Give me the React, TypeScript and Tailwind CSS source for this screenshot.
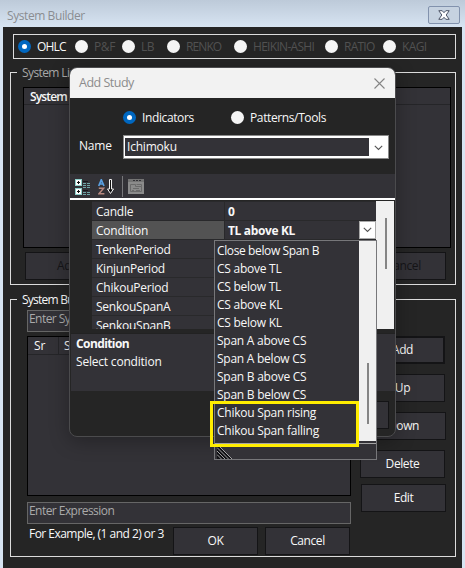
import clsx from "clsx";
import type { ReactNode } from "react";

const chartTypes = [
  { label: "OHLC", cell: "w-[57px]", text: "tracking-[-0.8px]" },
  { label: "P&F", cell: "w-[47px]", text: "tracking-[-0.4px]" },
  { label: "LB", cell: "w-[45px]", text: "tracking-[-0.5px]" },
  { label: "RENKO", cell: "w-[67px]", text: "tracking-[-0.9px]" },
  { label: "HEIKIN-ASHI", cell: "w-[91px]", text: "tracking-[-0.7px]" },
  { label: "RATIO", cell: "w-[58px]", text: "tracking-[-0.75px]" },
  { label: "KAGI", cell: "w-[60px]", text: "tracking-[-0.6px]" },
];

const properties = [
  { name: "Candle", value: "0" },
  { name: "Condition", value: "TL above KL", selected: true },
  { name: "TenkenPeriod", value: "" },
  { name: "KinjunPeriod", value: "" },
  { name: "ChikouPeriod", value: "" },
  { name: "SenkouSpanA", value: "" },
  { name: "SenkouSpanB", value: "" },
];

const conditions = [
  "Close below Span B",
  "CS above TL",
  "CS below TL",
  "CS above KL",
  "CS below KL",
  "Span A above CS",
  "Span A below CS",
  "Span B above CS",
  "Span B below CS",
  "Chikou Span rising",
  "Chikou Span falling",
];

function Radio({ checked }: { checked?: boolean }) {
  return (
    <span
      className={clsx(
        "flex h-[13px] w-[13px] shrink-0 items-center justify-center rounded-full",
        checked ? "bg-[#0067c0]" : "bg-[#f5f5f5]"
      )}
    >
      {checked && <span className="h-[5px] w-[5px] rounded-full bg-white" />}
    </span>
  );
}

function Chevron() {
  return (
    <svg width="9" height="6" viewBox="0 0 9 6" fill="none" stroke="#555" strokeWidth="1.1">
      <path d="M0.8 0.8 L4.5 4.5 L8.2 0.8" />
    </svg>
  );
}

function Button({ children, className }: { children?: ReactNode; className?: string }) {
  return (
    <button
      className={clsx(
        "flex h-7 w-[85px] shrink-0 items-center justify-center border border-[#141416] bg-[#333237] tracking-[-0.4px]",
        className
      )}
    >
      {children}
    </button>
  );
}

function Group({
  title,
  titleClass,
  className,
  children,
}: {
  title: string;
  titleClass?: string;
  className?: string;
  children: ReactNode;
}) {
  return (
    <section className={clsx("ml-[7px] w-[446px] border border-[#dcdcdc]", className)}>
      <div className={clsx("-mt-[9px] ml-[6px] flex h-[18px] w-max items-center bg-[#252525] px-[5px]", titleClass)}>
        {title}
      </div>
      {children}
    </section>
  );
}

function Toolbar() {
  return (
    <div className="flex h-6 items-center bg-[#333237] pt-px pl-[5px]">
      {/* Categorized */}
      <svg width="16" height="16" viewBox="0 0 16 16" shapeRendering="crispEdges">
        <path fill="#8fd0cb" d="M0 0h7v7H0zM0 9h7v7H0z" />
        <path fill="#fff" d="M1 1h5v5H1zM1 10h5v5H1z" />
        <path fill="#111" d="M3 2h1v3H3zM2 3h3v1H2zM3 11h1v3H3zM2 12h3v1H2z" />
        <path
          stroke="#6fa5a7"
          strokeDasharray="3 1"
          d="M8 4.5h8M8 6.5h8M8 8.5h8M8 13.5h8M8 15.5h8"
        />
        <path stroke="#17171b" d="M8 2.5h5M8 11.5h5" />
      </svg>
      {/* Alphabetical */}
      <svg className="ml-[7px]" width="16" height="16" viewBox="0 0 16 16" fill="none">
        <path stroke="#5a9fe0" strokeWidth="1.7" d="M0.7 7L3.3 0.8L6 7M1.5 5H5.2" />
        <path stroke="#b78980" strokeWidth="1.5" d="M0.8 9.2H5.6L1 14.7H6.4" />
        <path stroke="#f4f4f4" fill="#111" d="M11.5 0.5h2v9.5h2l-3 4.5l-3-4.5h2z" />
      </svg>
      <span className="ml-2 h-[21px] w-px bg-[#77777a]" />
      {/* Property pages */}
      <svg className="ml-[5px]" width="16" height="15" viewBox="0 0 16 15" fill="none">
        <path fill="#8b8b8b" d="M0 0h16v15H0z" />
        <path fill="#747474" d="M0 0h16v3H0z" />
        <path stroke="#333237" d="M5 1.5h2M8 1.5h2M11 1.5h2" />
        <path stroke="#6a6a6a" d="M2.5 5.5h5v2h6v5h-11zM5 9.5h6M4 11.5h2M8 11.5h4M8.5 5.5h5v2" />
      </svg>
    </div>
  );
}

function ConditionMenu() {
  return (
    <div className="absolute top-[240px] left-[214px] flex h-[220px] w-[163px] flex-col border border-[#77777a] bg-[#333237]">
      <div className="flex h-[202px]">
        <ul className="w-36 pt-px pl-[2px] tracking-[-0.25px]">
          {conditions.map((item) => (
            <li key={item} className="h-[18px] leading-[18px] whitespace-nowrap first:tracking-[-0.38px]">
              {item}
            </li>
          ))}
        </ul>
        <div className="h-[200px] w-[17px] bg-[#f0f0f0] pt-[122px] pl-2">
          <div className="h-[61px] w-[2px] bg-[#858585]" />
        </div>
      </div>
      <div className="flex flex-1 items-end border-t border-[#a5a5a5] pl-[2px]">
        <svg width="15" height="12" viewBox="0 0 15 12">
          <path fill="#111115" d="M0 0h3l12 12H0z" />
          <path stroke="#c8c8c8" strokeWidth="0.8" d="M3 0l12 12M0 0.5L11.5 12M0 4l8 8M0 7.5L4.5 12" />
        </svg>
      </div>
    </div>
  );
}

function AddStudyDialog() {
  return (
    <div className="absolute top-[67px] left-[69px] h-[370px] w-[327px] overflow-hidden rounded-[8px] border border-[#4b4b4d] bg-[#252525] shadow-[0_4px_20px_rgba(0,0,0,0.3)]">
      <header className="flex h-[30px] items-center justify-between bg-[#f2f2f2] pr-[10px] pl-[9px] text-[#8c8c8c]">
        <span className="text-[12.5px] tracking-[-0.5px]">Add Study</span>
        <svg width="11" height="11" viewBox="0 0 11 11" stroke="#858585" strokeWidth="1.1">
          <path d="M0.5 0.5l10 10M10.5 0.5l-10 10" />
        </svg>
      </header>

      <div className="flex h-[39px] items-center pl-[53px]">
        <div className="flex w-[108px] items-center gap-[6px]">
          <Radio checked />
          <span className="tracking-[-0.38px]">Indicators</span>
        </div>
        <div className="flex items-center gap-[6px]">
          <Radio />
          <span className="tracking-[-0.38px]">Patterns/Tools</span>
        </div>
      </div>

      <div className="flex h-[37px] pl-[9px]">
        <span className="w-11 pt-px">Name</span>
        <div className="-mt-[2px] flex h-6 w-[266px] border border-[#8a8a8a] bg-white p-px pt-[2px]">
          <div className="h-[18px] w-[244px] bg-[#333237] pl-[2px] leading-[17px]">Ichimoku</div>
          <div className="flex flex-1 items-center justify-center">
            <Chevron />
          </div>
        </div>
      </div>

      <Toolbar />
      <div className="h-[2px] bg-white" />

      <div className="flex h-[129px] overflow-hidden pt-px">
        <div className="w-[306px] pl-[22px]">
          {properties.map((row) => (
            <div key={row.name} className="flex h-[19px] border-t border-[#29292b] bg-[#333237] leading-[19px]">
              <div
                className={clsx(
                  "w-[133px] border-r border-[#29292b] pl-1 tracking-[-0.25px]",
                  row.selected && "bg-[#535353]"
                )}
              >
                {row.name}
              </div>
              <div className="flex-1 pl-[3px] font-bold tracking-[-0.35px]">{row.value}</div>
              {row.selected && (
                <div className="flex h-[18px] w-[17px] items-center justify-center border border-[#aaa] bg-white">
                  <Chevron />
                </div>
              )}
            </div>
          ))}
        </div>
        <div className="h-[128px] w-[18px] bg-[#f0f0f0] pt-[17px] pl-[9px]">
          <div className="h-[51px] w-[2px] bg-[#858585]" />
        </div>
      </div>

      <div className="mt-1 ml-px h-[58px] border-t border-[#222] bg-[#333237] pl-[5px] leading-[18px]">
        <div className="pt-[1px] font-bold tracking-[-0.6px]">Condition</div>
        <div>Select condition</div>
      </div>
      <div className="flex justify-end pt-[10px] pr-[6px]">
        <Button />
      </div>
    </div>
  );
}

export default function App() {
  return (
    <div className="relative h-[568px] w-[465px] overflow-hidden bg-[#d7e4f2] font-['Open_Sans','Noto_Sans',sans-serif] text-[12px] leading-4 tracking-[-0.2px] whitespace-nowrap text-[#f8f8f8]">
      <header className="flex h-[27px] justify-between bg-linear-to-b from-[#bdcad9] to-[#d7e4f2] pr-[5px] pl-[7px] text-[#8a8d91]">
        <span className="pt-[8px] tracking-[-0.42px]">System Builder</span>
        <div className="mt-[6px] flex h-[18px] w-8 items-center justify-center rounded-[2px] border border-[#8292ad] bg-[#c6d2e0]">
          <svg width="12" height="10" viewBox="0 0 12 10">
            <path
              fill="#fff"
              stroke="#4d5466"
              d="M0.8 0.7h3.4L6 2.7L7.8 0.7h3.4L8.2 5l3 4.3H7.8L6 7.3L4.2 9.3H0.8L3.8 5z"
            />
          </svg>
        </div>
      </header>

      <main className="mx-[3px] flex h-[541px] w-[459px] flex-col bg-[#252525] pt-[7px]">
        <div className="ml-[10px] flex h-[25px] w-[443px] shrink-0 items-center border border-[#dcdcdc] pl-1">
          {chartTypes.map((type, i) => (
            <div key={type.label} className={clsx("flex shrink-0 items-center gap-[6px]", type.cell)}>
              <Radio checked={i === 0} />
              <span className={clsx(type.text, i > 0 && "text-[#515151]")}>{type.label}</span>
            </div>
          ))}
        </div>

        <Group
          title="System List"
          titleClass="tracking-[-0.6px] text-[#a8a8a8]"
          className="mt-[13px] h-[213px] shrink-0"
        >
          <div className="mt-[5px] ml-3 h-[161px] w-[428px] border border-black bg-[#333237]">
            <div className="h-[17px] border-b border-[#252528] pl-[6px] leading-[18px] font-semibold tracking-[-0.85px]">
              System Name
            </div>
          </div>
          <div className="mt-1 flex justify-between pr-[9px] pl-[14px] text-[#151517]">
            <Button>Add</Button>
            <Button>Cancel</Button>
          </div>
        </Group>

        <Group
          title="System Builder"
          titleClass="font-medium tracking-[-0.75px]"
          className="mt-[14px] h-[258px] shrink-0"
        >
          <div className="mt-px ml-4 h-[22px] w-[324px] border border-[#666] bg-[#333237] pl-[1px] tracking-[-0.55px] text-[#aaa]">
            Enter System Name
          </div>
          <div className="mt-1 flex pl-4">
            <div className="h-[160px] w-[324px] border border-black bg-[#333237]">
              <div className="flex h-[18px] border-b border-[#252528] leading-[18px]">
                <span className="w-[31px] border-r border-[#252528] pl-[6px]">Sr</span>
                <span className="pl-[5px]">System</span>
              </div>
            </div>
            <div className="ml-[9px] flex h-[160px] w-[87px] flex-col">
              <Button className="border-2">Add</Button>
              <Button className="mt-[10px]">Up</Button>
              <Button className="mt-[10px] ml-px">Down</Button>
              <Button className="mt-[10px]">Delete</Button>
              <Button className="mt-[6px] ml-px">Edit</Button>
            </div>
          </div>
          <div className="mt-[6px] ml-4 h-[22px] w-[324px] border border-[#666] bg-[#333237] pl-[1px] tracking-[-0.55px] text-[#aaa]">
            Enter Expression
          </div>
          <div className="mt-[3px] flex pl-[18px]">
            <span className="-mt-px w-36 shrink-0 tracking-[-0.53px]">For Example, (1 and 2) or 3</span>
            <Button>OK</Button>
            <Button className="ml-[7px]">Cancel</Button>
          </div>
        </Group>
      </main>

      <AddStudyDialog />
      <ConditionMenu />
      {/* Highlight over the new conditions */}
      <div className="absolute top-[401px] left-[210px] h-[46px] w-[149px] border-[3px] border-[#ffed00]" />
    </div>
  );
}
